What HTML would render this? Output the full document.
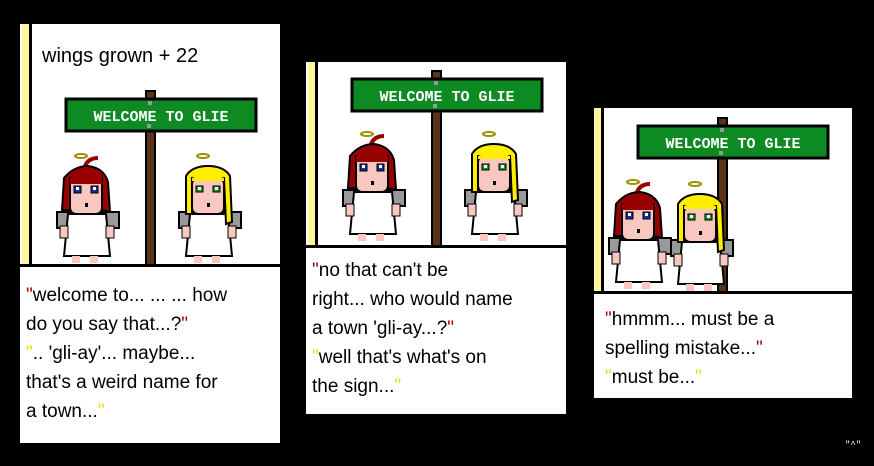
<!DOCTYPE html>
<html><head><meta charset="utf-8"><style>
html,body{margin:0;padding:0;background:#000;width:874px;height:466px;overflow:hidden;position:relative}
.p{position:absolute;background:#fff}
.y{position:absolute;background:#fff59a;border-right:3px solid #000}
.t{position:absolute;font-family:"Liberation Sans",sans-serif;font-size:19px;color:#000;white-space:nowrap;line-height:29px}
.r{color:#a00000}.yl{color:#f0e000}
svg{position:absolute;left:0;top:0}
</style></head><body>
<div class="p" style="left:20px;top:24px;width:260px;height:419px"></div>
<div class="y" style="left:22px;top:24px;width:7px;height:241px"></div>
<div class="p" style="left:306px;top:62px;width:260px;height:352px"></div>
<div class="y" style="left:308px;top:62px;width:7px;height:184px"></div>
<div class="p" style="left:594px;top:108px;width:258px;height:290px"></div>
<div class="y" style="left:594px;top:108px;width:7px;height:184px"></div>
<svg width="874" height="466" viewBox="0 0 874 466">
<defs>
<g id="sign">
<rect x="80" y="-8" width="9" height="175" fill="#5a3418" stroke="#000" stroke-width="2"/>
<rect x="0" y="0" width="190" height="32" fill="#0d8a22" stroke="#000" stroke-width="3"/>
<rect x="82" y="2" width="4" height="4" fill="#999"/><rect x="81" y="25" width="4" height="4" fill="#999"/>
<text x="95" y="22" text-anchor="middle" font-family="Liberation Mono,monospace" font-weight="bold" font-size="15" fill="#fff">WELCOME TO GLIE</text>
</g>
<g id="body">
<ellipse cx="27" cy="4" rx="6" ry="2" fill="none" stroke="#a09000" stroke-width="2"/>
<rect x="3" y="60" width="62" height="16" fill="#999" stroke="#000" stroke-width="2"/>
<path d="M14 62 H52 L56 104 H10 Z" fill="#fff" stroke="#000" stroke-width="2"/>
<rect x="6" y="74" width="8" height="12" fill="#f8c8c0" stroke="#000"/><rect x="52" y="74" width="8" height="12" fill="#f8c8c0" stroke="#000"/>
<rect x="18" y="104" width="8" height="7" fill="#f8c8c0"/><rect x="36" y="104" width="8" height="7" fill="#f8c8c0"/>
</g>
<g id="red">
<use href="#body"/>
<path d="M30 18 Q32 6 44 6" fill="none" stroke="#900" stroke-width="4"/>
<path d="M8 58 L10 26 Q20 14 34 14 Q50 16 54 30 L56 60 L48 58 V26 H16 V58 Z" fill="#990000" stroke="#000" stroke-width="2"/>
<rect x="16" y="26" width="32" height="36" rx="6" fill="#f8c8c0" stroke="#000" stroke-width="2"/>
<path d="M16 26 Q32 18 48 26 V32 H16Z" fill="#990000"/>
<rect x="20" y="34" width="7" height="7" fill="#1a2aa0" stroke="#000"/><rect x="37" y="34" width="7" height="7" fill="#1a2aa0" stroke="#000"/>
<rect x="22" y="35" width="3" height="3" fill="#fff"/><rect x="39" y="35" width="3" height="3" fill="#fff"/>
<rect x="31" y="51" width="3" height="4" fill="#000"/>
</g>
<g id="blonde">
<use href="#body"/>
<path d="M10 62 L10 24 Q16 14 32 14 Q48 14 54 24 L56 70 L50 72 L48 26 H16 V62Z" fill="#ffee00" stroke="#000" stroke-width="2"/>
<rect x="16" y="26" width="32" height="36" rx="6" fill="#f8c8c0" stroke="#000" stroke-width="2"/>
<path d="M16 26 Q32 20 48 26 V29 H16Z" fill="#ffee00"/>
<rect x="20" y="34" width="7" height="6" fill="#1a9a1a" stroke="#000"/><rect x="37" y="34" width="7" height="6" fill="#1a9a1a" stroke="#000"/>
<rect x="22" y="35" width="3" height="3" fill="#fff"/><rect x="39" y="35" width="3" height="3" fill="#fff"/>
<rect x="31" y="51" width="3" height="4" fill="#000"/>
</g>
</defs>
<use href="#sign" x="66" y="99"/>
<use href="#red" x="54" y="152"/>
<use href="#blonde" x="176" y="152"/>
<rect x="20" y="264" width="260" height="3" fill="#000"/>
<use href="#sign" x="352" y="79"/>
<use href="#red" x="340" y="130"/>
<use href="#blonde" x="462" y="130"/>
<rect x="306" y="245" width="260" height="3" fill="#000"/>
<use href="#sign" x="638" y="126"/>
<use href="#red" x="606" y="178"/>
<use href="#blonde" x="668" y="180"/>
<rect x="594" y="291" width="258" height="3" fill="#000"/>
<text x="845" y="447" fill="#fff" font-family="Liberation Mono" font-size="9">"^"</text>
</svg>
<div class="t" style="left:42px;top:42px;font-size:20px">wings grown + 22</div>
<div class="t" style="left:26px;top:281px"><span class="r">"</span>welcome to... ... ... how<br>do you say that...?<span class="r">"</span><br><span class="yl">"</span>.. 'gli-ay'... maybe...<br>that's a weird name for<br>a town...<span class="yl">"</span></div>
<div class="t" style="left:312px;top:256px"><span class="r">"</span>no that can't be<br>right... who would name<br>a town 'gli-ay...?<span class="r">"</span><br><span class="yl">"</span>well that's what's on<br>the sign...<span class="yl">"</span></div>
<div class="t" style="left:605px;top:305px"><span class="r">"</span>hmmm... must be a<br>spelling mistake...<span class="r">"</span><br><span class="yl">"</span>must be...<span class="yl">"</span></div>
</body></html>
